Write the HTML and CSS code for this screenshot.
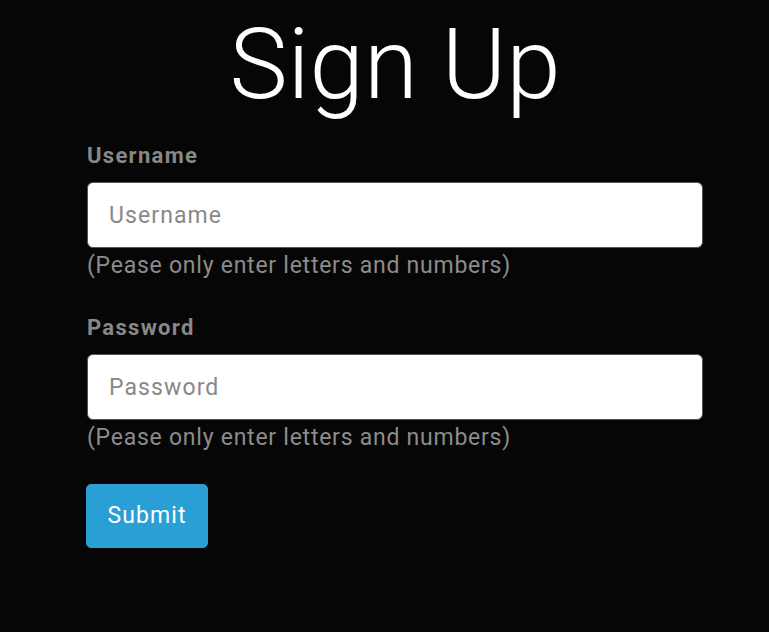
FILE: index.html
```html
<!DOCTYPE html>
<html lang="en">
<head>
<meta charset="utf-8">
<title>Sign Up</title>
<link rel="stylesheet" href="styles.css">
</head>
<body>
<main class="page">
  <h1 class="title">Sign Up</h1>
  <form class="form">
    <div class="group">
      <label class="label" for="username">Username</label>
      <input class="input" id="username" type="text" placeholder="Username">
      <small class="help">(Pease only enter letters and numbers)</small>
    </div>
    <div class="group">
      <label class="label" for="password">Password</label>
      <input class="input" id="password" type="password" placeholder="Password">
      <small class="help">(Pease only enter letters and numbers)</small>
    </div>
    <button class="btn" type="button">Submit</button>
  </form>
</main>
</body>
</html>
```
FILE: styles.css
```css
html, body {
  margin: 0;
  padding: 0;
  background: #060606;
}
body {
  font-family: Roboto, "Liberation Sans", sans-serif;
  color: #adafae;
}
.page {
  width: 616px;
  margin-left: 87px;
  padding-top: 6px;
}
.title {
  margin: 0;
  font-size: 98px;
  font-weight: 300;
  line-height: 1.2;
  color: #ffffff;
  text-align: center;
}
.form {
  display: flex;
  flex-direction: column;
  align-items: flex-start;
  margin-top: 16px;
}
.group {
  display: flex;
  flex-direction: column;
  width: 100%;
  margin-bottom: 29px;
}
.label {
  font-size: 22px;
  font-weight: 700;
  letter-spacing: 1.3px;
  line-height: 32px;
  color: #888888;
  margin-bottom: 10px;
}
.input {
  box-sizing: border-box;
  width: 100%;
  height: 66px;
  padding: 2px 21px 0;
  font-family: inherit;
  font-size: 23px;
  letter-spacing: 1.1px;
  color: #495057;
  background: #ffffff;
  border: 1px solid #555555;
  border-radius: 6px;
  outline: none;
}
.input::placeholder {
  color: #888888;
}
.help {
  font-size: 23px;
  letter-spacing: 0.75px;
  line-height: 34px;
  color: #8c8c8c;
  margin-top: 1px;
}
.btn {
  margin-top: 0;
  box-sizing: border-box;
  width: 122px;
  height: 64px;
  margin-left: -1px;
  padding: 0;
  font-family: inherit;
  font-size: 23px;
  letter-spacing: 1.1px;
  color: #ffffff;
  background: #2a9fd6;
  border: 1px solid #2a9fd6;
  border-radius: 5px;
}
```
